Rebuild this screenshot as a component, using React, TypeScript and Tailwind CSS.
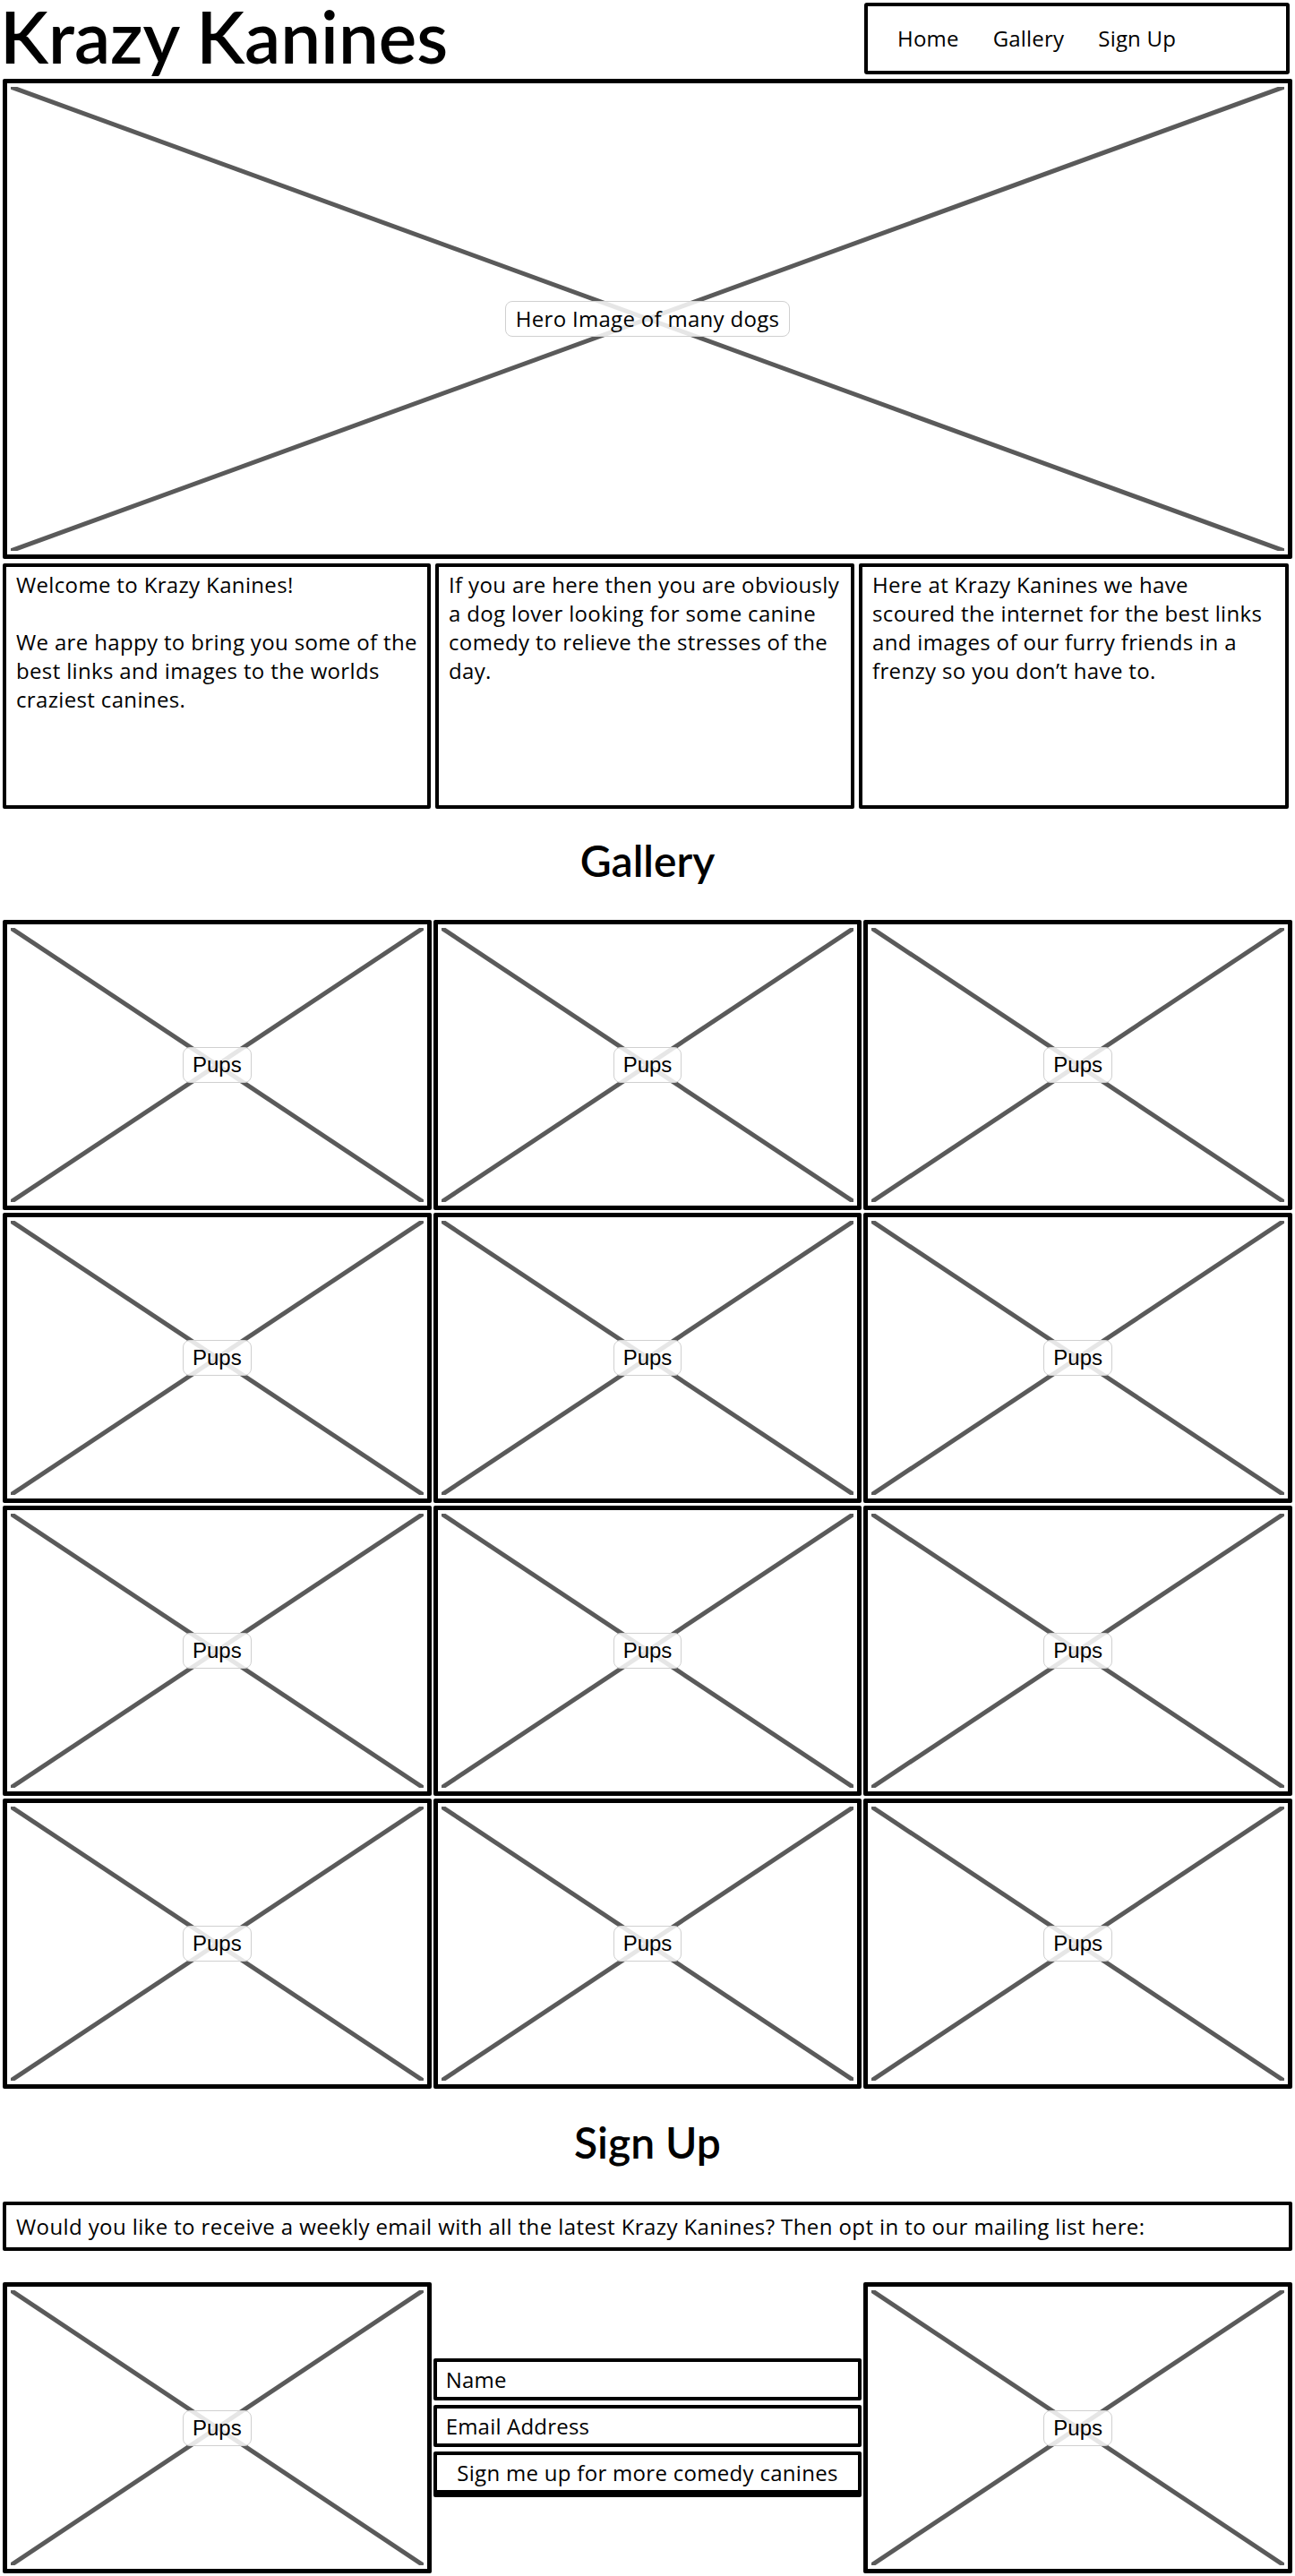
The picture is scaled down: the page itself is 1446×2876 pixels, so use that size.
import React from 'react';

const body = "font-['Open_Sans','Noto_Sans',sans-serif]";
const display = "font-['Lato','Noto_Sans',sans-serif]";
const pupsFont = "font-['Liberation_Sans',Arial,sans-serif]";

function Placeholder({ label, labelClass, className }: { label: string; labelClass?: string; className?: string }) {
  return (
    <div className={`relative border-[5px] border-black bg-white rounded-[2px] ${className ?? ''}`}>
      <svg className="absolute left-[4px] top-[4px] h-[calc(100%-8px)] w-[calc(100%-8px)]">
        <line x1="0" y1="0" x2="100%" y2="100%" stroke="#5a5a5a" strokeWidth="5" />
        <line x1="100%" y1="0" x2="0" y2="100%" stroke="#5a5a5a" strokeWidth="5" />
      </svg>
      <div className="absolute inset-0 flex items-center justify-center">
        <span
          className={`flex h-[40px] items-center rounded-lg border-[1.5px] border-[#d0d0d0] bg-white/85 text-black ${labelClass ?? ''}`}
        >
          {label}
        </span>
      </div>
    </div>
  );
}

function TextCard({ lines }: { lines: string[] }) {
  return (
    <div className="h-[274px] rounded-[2px] border-4 border-black bg-white px-[11px] pt-[4px]">
      {lines.map((line, i) => (
        <div
          key={i}
          className="h-[32px] whitespace-nowrap text-[24px] leading-[32px] tracking-[0.35px] text-black"
        >
          {line || '\u00a0'}
        </div>
      ))}
    </div>
  );
}

export default function App() {
  const pups = Array.from({ length: 12 }, (_, i) => i);

  return (
    <div className={`min-h-[2876px] w-[1446px] bg-white ${body}`}>
      {/* Header */}
      <header className="flex h-[88px] items-start justify-between">
        <h1 className={`${display} text-[80px] leading-[80px] font-semibold text-black`}>Krazy Kanines</h1>
        <nav className="mr-[6px] mt-[3px] flex h-[80px] w-[475px] items-center gap-[38px] rounded-[3px] border-4 border-black pl-[33px] text-[24px] tracking-[0.2px] text-black">
          <span>Home</span>
          <span>Gallery</span>
          <span>Sign Up</span>
        </nav>
      </header>

      {/* Hero */}
      <div className="px-[3px]">
        <Placeholder
          label="Hero Image of many dogs"
          labelClass="px-[11px] text-[24px] tracking-[0.3px]"
          className="h-[536px]"
        />
      </div>

      {/* Intro cards */}
      <div className="mt-[5px] grid grid-cols-[478px_468px_480px] gap-[5px] px-[3px]">
        <TextCard
          lines={[
            'Welcome to Krazy Kanines!',
            '',
            'We are happy to bring you some of the',
            'best links and images to the worlds',
            'craziest canines.',
          ]}
        />
        <TextCard
          lines={[
            'If you are here then you are obviously',
            'a dog lover looking for some canine',
            'comedy to relieve the stresses of the',
            'day.',
          ]}
        />
        <TextCard
          lines={[
            'Here at Krazy Kanines we have',
            'scoured the internet for the best links',
            'and images of our furry friends in a',
            'frenzy so you don\u2019t have to.',
          ]}
        />
      </div>

      {/* Gallery */}
      <h2 className={`${display} mb-[42px] mt-[34px] text-center text-[48px] leading-[48px] font-semibold text-black`}>
        Gallery
      </h2>
      <div className="grid grid-cols-3 gap-x-[2px] gap-y-[3px] px-[3px]">
        {pups.map((i) => (
          <Placeholder key={i} label="Pups" labelClass={`px-[10px] text-[24px] ${pupsFont}`} className="h-[324px]" />
        ))}
      </div>

      {/* Sign up */}
      <h2 className={`${display} mb-[42px] mt-[36px] text-center text-[48px] leading-[48px] font-semibold text-black`}>
        Sign Up
      </h2>
      <div className="mx-[3px] flex h-[55px] items-center whitespace-nowrap rounded-[2px] border-4 border-black px-[11px] text-[24px] tracking-[0.4px] text-black">
        Would you like to receive a weekly email with all the latest Krazy Kanines? Then opt in to our mailing list here:
      </div>

      <div className="mt-[35px] grid grid-cols-3 gap-x-[2px] px-[3px] pb-[3px]">
        <Placeholder label="Pups" labelClass={`px-[10px] text-[24px] ${pupsFont}`} className="h-[325px]" />
        <div className="flex flex-col justify-center gap-[5px]">
          <div className="flex h-[47px] items-center rounded-[2px] border-4 border-black px-[10px] text-[24px] tracking-[0.2px] text-black">
            Name
          </div>
          <div className="flex h-[47px] items-center rounded-[2px] border-4 border-black px-[10px] text-[24px] tracking-[0.2px] text-black">
            Email Address
          </div>
          <button className="flex h-[51px] items-center justify-center rounded-[2px] border-4 border-b-[8px] border-black bg-white text-[24px] tracking-[0.3px] text-black">
            Sign me up for more comedy canines
          </button>
        </div>
        <Placeholder label="Pups" labelClass={`px-[10px] text-[24px] ${pupsFont}`} className="h-[325px]" />
      </div>
    </div>
  );
}
